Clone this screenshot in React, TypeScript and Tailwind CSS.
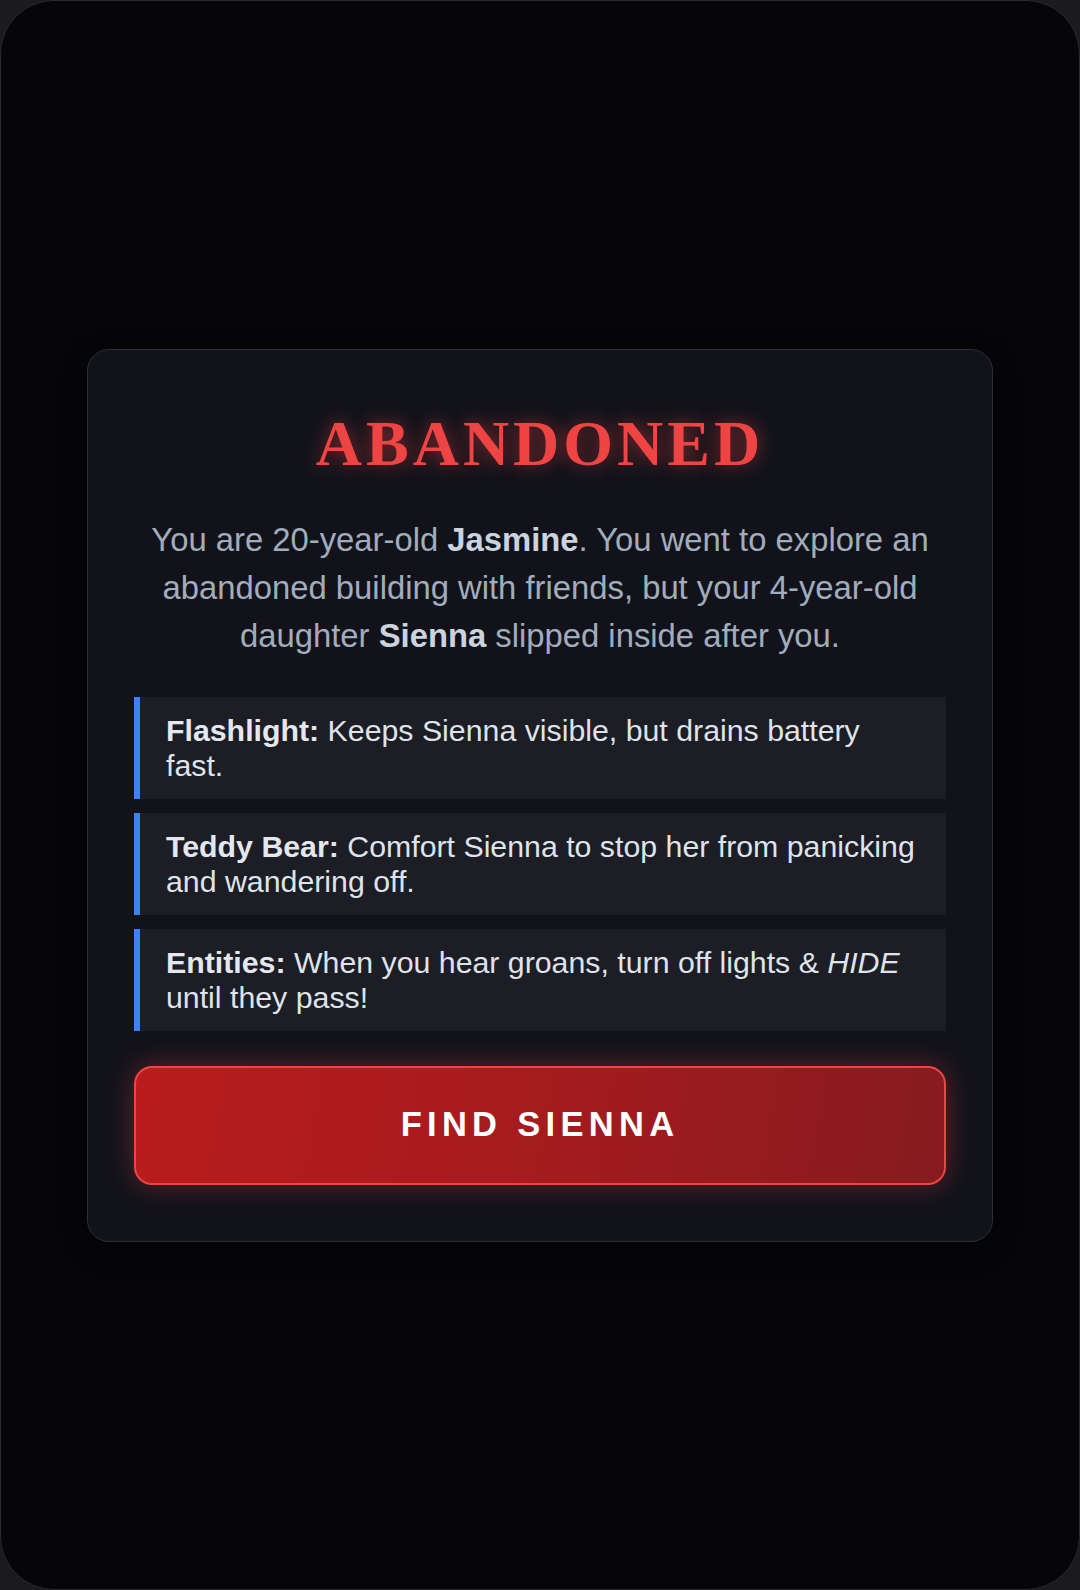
const RULES: { label: string; body: React.ReactNode }[] = [
  { label: "Flashlight:", body: " Keeps Sienna visible, but drains battery fast." },
  { label: "Teddy Bear:", body: " Comfort Sienna to stop her from panicking and wandering off." },
  {
    label: "Entities:",
    body: (
      <>
        {" "}When you hear groans, turn off lights &amp; <em>HIDE</em> until they pass!
      </>
    ),
  },
];

export default function App() {
  return (
    <div className="h-[1590px] w-full bg-[#1b1b1d] font-['Liberation_Sans',Arial,sans-serif]">
      <div className="flex h-full w-full items-center justify-center rounded-[54px] border border-[#2a2a2c] bg-[#060609]">
        <div className="w-[906px] rounded-[22px] border border-[#2c2d35] bg-[#12131a] px-[46px] pt-[58px] pb-[56px] shadow-[0_8px_24px_rgba(0,0,0,0.5)]">
          <h1 className="text-center font-['Liberation_Serif','Times_New_Roman',serif] text-[64px] font-bold leading-[71px] tracking-[4px] text-[#ef4444] [text-shadow:0_0_18px_rgba(239,68,68,0.55)]">
            ABANDONED
          </h1>

          <p className="mt-[37px] text-center text-[32.8px] leading-[48px] text-[#a1acbd]">
            You are 20-year-old <strong className="font-bold text-[#cbd3df]">Jasmine</strong>. You went to explore an
            abandoned building with friends, but your 4-year-old daughter{" "}
            <strong className="font-bold text-[#cbd3df]">Sienna</strong> slipped inside after you.
          </p>

          <div className="mt-[37px] flex flex-col gap-[14px]">
            {RULES.map((r) => (
              <div
                key={r.label}
                className="border-l-[6px] border-[#3b82f6] bg-[#1c1d25] pt-[16px] pb-[16px] pl-[26px] pr-[28px] text-[30.3px] leading-[35px] text-[#dfe3ea]"
              >
                <strong className="font-bold text-[#e4e7ee]">{r.label}</strong>
                {r.body}
              </div>
            ))}
          </div>

          <button
            type="button"
            className="mt-[35px] flex h-[119px] w-full items-center justify-center rounded-[18px] border-2 border-[#ef4444] bg-[linear-gradient(100deg,#b91c1c_0%,#a51b1e_50%,#861b1f_100%)] text-[34.5px] font-bold tracking-[5.3px] text-white shadow-[0_0_28px_rgba(239,68,68,0.35)]"
          >
            FIND SIENNA
          </button>
        </div>
      </div>
    </div>
  );
}
